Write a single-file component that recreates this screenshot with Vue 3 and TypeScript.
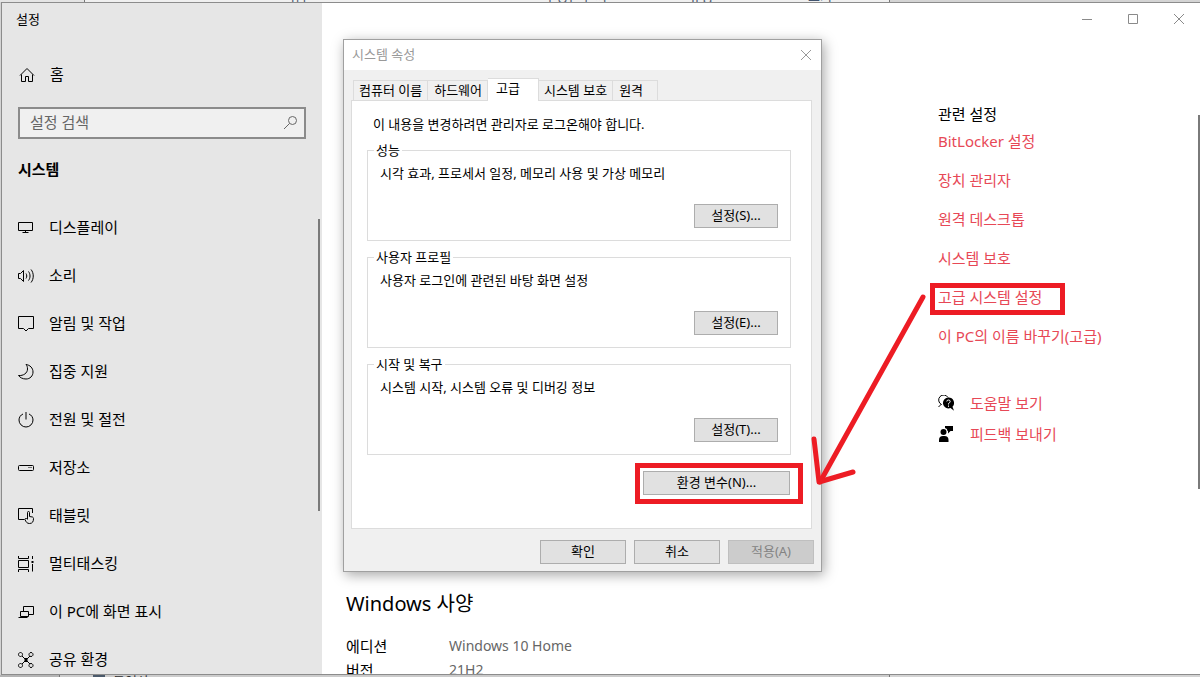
<script setup lang="ts">
import { ref } from 'vue'

interface NavItem {
  label: string
  icon: string
}

const navItems: NavItem[] = [
  { label: '디스플레이', icon: 'display' },
  { label: '소리', icon: 'sound' },
  { label: '알림 및 작업', icon: 'notice' },
  { label: '집중 지원', icon: 'moon' },
  { label: '전원 및 절전', icon: 'power' },
  { label: '저장소', icon: 'storage' },
  { label: '태블릿', icon: 'tablet' },
  { label: '멀티태스킹', icon: 'multitask' },
  { label: '이 PC에 화면 표시', icon: 'project' },
  { label: '공유 환경', icon: 'share' },
]

const iconPaths: Record<string, string> = {
  display: 'M1.5 3.5h14v8h-14zM8.5 11.5v2M5.5 13.5h6',
  sound:
    'M1.5 6.5v5h2l3 3v-11l-3 3zM9 6.5c1 1.5 1 3.500 0 5M11.500 4.500c2 2.500 2 6.500 0 9M14 2.500c3 3.500 3 9.500 0 13',
  notice: 'M1.500 1.500h15v12h-5l-2.500 2.500l-2.500-2.500h-5z',
  moon: 'M9 1.500c4 .5 7 3.500 7 7.500c0 4-3 7-7 7c-3.500 0-6-1.500-7.500-3.500c5 .5 9-2.500 9-6.500c0-2-.5-3.500-1.500-4.500z',
  power: 'M9 1v7.500M6 3c-2.500 1-4 3.500-4 6a7 7 0 0 0 14 0c0-2.500-1.500-5-4-6',
  storage: 'M2.500 6.500h13q1 0 1 1v3q0 1-1 1h-13q-1 0-1-1v-3q0-1 1-1zM11.500 8.500h1M13.500 8.500h1',
  tablet:
    'M7.500 12.500h-6v-11h14v4.500M10.500 12v-6.500q0-1 1-1t1 1v4l3 .5q1 .5 1 1.500c0 3-1 5-4 5c-2.500 0-3.500-1.500-4.500-4q0-1.500 1.500-1l1 1',
  multitask:
    'M1.500 1v2.500h10v-2.500M1.500 5.500h10v7h-10zM1.500 17v-2.500h10v2.500M15.500 1v3M15.500 9v7.500M14.500 6.500h2M14.500 7.500h2',
  project: 'M6.500 8.500v-5h10v8h-5M3.500 8.500h8v5h-8zM1.500 14.500h9',
  share:
    'M5 5l8 8M13 5l-8 8M3.500 1.500a2 2 0 1 0 .01 0M14 1.500a2 2 0 1 0 .01 0M3.500 12.500a2 2 0 1 0 .01 0M14 12.500a2 2 0 1 0 .01 0M8 7.500h2v3h-2z',
}

const relatedLinks: string[] = [
  'BitLocker 설정',
  '장치 관리자',
  '원격 데스크톱',
  '시스템 보호',
  '고급 시스템 설정',
  '이 PC의 이름 바꾸기(고급)',
]

const tabs: string[] = ['컴퓨터 이름', '하드웨어', '고급', '시스템 보호', '원격']
const activeTab = ref('고급')

const groups = [
  { title: '성능', text: '시각 효과, 프로세서 일정, 메모리 사용 및 가상 메모리', button: '설정(S)...' },
  { title: '사용자 프로필', text: '사용자 로그인에 관련된 바탕 화면 설정', button: '설정(E)...' },
  { title: '시작 및 복구', text: '시스템 시작, 시스템 오류 및 디버깅 정보', button: '설정(T)...' },
]

const specs = [
  { name: '에디션', value: 'Windows 10 Home' },
  { name: '버전', value: '21H2' },
]

const query = ref('')
</script>

<template>
  <div class="desktop">
    <div class="explorer" aria-hidden="true">
      <div class="explorer-head">
        <span class="col-name">이름</span>
        <span class="col-date">수정한 날짜</span>
        <span class="col-type">유형</span>
        <span class="col-size">크기</span>
      </div>
      <div class="explorer-foot">
        <span class="thumb"></span>
        <span>동영상</span>
      </div>
    </div>

    <div class="window">
      <aside class="sidebar">
        <div class="app-title">설정</div>
        <a href="#" class="nav-link home">
          <svg class="icon" viewBox="0 0 18 18">
            <path d="M2 9.500l7-7l7 7M3.500 8.500v7h4v-5h3v5h4v-7" />
          </svg>
          <span>홈</span>
        </a>
        <label class="search">
          <input v-model="query" type="text" placeholder="설정 검색" aria-label="설정 검색" />
          <svg class="icon" viewBox="0 0 18 18">
            <circle cx="10.500" cy="6.500" r="4" />
            <path d="M7.500 9.500l-5.500 5.500" />
          </svg>
        </label>
        <h2 class="section">시스템</h2>
        <nav class="nav">
          <a v-for="item in navItems" :key="item.label" href="#" class="nav-link">
            <svg class="icon" viewBox="0 0 18 18"><path :d="iconPaths[item.icon]" /></svg>
            <span>{{ item.label }}</span>
          </a>
          <span class="nav-scroll"></span>
        </nav>
      </aside>

      <main class="main">
        <div class="controls">
          <button type="button" aria-label="최소화">
            <svg viewBox="0 0 12 12"><path d="M1 6.500h10" /></svg>
          </button>
          <button type="button" aria-label="최대화">
            <svg viewBox="0 0 12 12"><path d="M1.500 1.500h9v9h-9z" /></svg>
          </button>
          <button type="button" aria-label="닫기">
            <svg viewBox="0 0 12 12"><path d="M1 1l10 10M11 1l-10 10" /></svg>
          </button>
        </div>

        <div class="content">
          <section class="about">
            <h1>Windows 사양</h1>
            <table>
              <tbody>
                <tr v-for="spec in specs" :key="spec.name">
                  <th scope="row">{{ spec.name }}</th>
                  <td>{{ spec.value }}</td>
                </tr>
              </tbody>
            </table>
          </section>

          <section class="related">
            <h2>관련 설정</h2>
            <ul>
              <li v-for="link in relatedLinks" :key="link" :class="{ marked: link === '고급 시스템 설정' }">
                <a href="#">{{ link }}</a>
              </li>
            </ul>
            <div class="support">
              <a href="#">
                <svg viewBox="0 0 16 16">
                  <path class="line" d="M3.500 9.500a5 5 0 1 1 6.500-7M3.500 9l-3 3" />
                  <path d="M10.500 2.500a5.500 5.500 0 1 0 2 10.600l3.500 2.700l-1.500-4a5.500 5.500 0 0 0-4-9.300z" />
                  <path class="mark" d="M8.800 6.500q0-1.500 1.700-1.500t1.700 1.500q0 1-1.700 2v1M10.500 10.500v1.300" />
                </svg>
                <span>도움말 보기</span>
              </a>
              <a href="#">
                <svg viewBox="0 0 16 16">
                  <circle cx="5.500" cy="6" r="3" />
                  <path d="M1 16v-2q0-4 4-4h1.500q4 0 4 4v2zM7 0h8v5h-2.500l-2.500 2.500v-2.500h-.5q0-2.500-2.500-3z" />
                </svg>
                <span>피드백 보내기</span>
              </a>
            </div>
          </section>
        </div>
        <span class="page-scroll"></span>
      </main>

      <div class="dialog" role="dialog" aria-labelledby="dialog-title">
        <header class="dialog-head">
          <span id="dialog-title">시스템 속성</span>
          <button type="button" aria-label="닫기">
            <svg viewBox="0 0 12 12"><path d="M1 1l10 10M11 1l-10 10" /></svg>
          </button>
        </header>
        <div class="dialog-body">
          <div class="tabs" role="tablist">
            <button
              v-for="tab in tabs"
              :key="tab"
              type="button"
              role="tab"
              class="tab"
              :class="{ active: tab === activeTab }"
              :aria-selected="tab === activeTab"
              @click="activeTab = tab"
            >
              {{ tab }}
            </button>
          </div>
          <div class="panel">
            <p class="notice">이 내용을 변경하려면 관리자로 로그온해야 합니다.</p>
            <fieldset v-for="group in groups" :key="group.title">
              <legend>{{ group.title }}</legend>
              <p>{{ group.text }}</p>
              <button type="button" class="btn small">{{ group.button }}</button>
            </fieldset>
            <div class="env">
              <button type="button" class="btn">환경 변수(N)...</button>
            </div>
          </div>
          <footer class="actions">
            <button type="button" class="btn">확인</button>
            <button type="button" class="btn">취소</button>
            <button type="button" class="btn" disabled>적용(A)</button>
          </footer>
        </div>
      </div>

      <svg class="arrow" viewBox="0 0 120 196" aria-hidden="true">
        <path d="M113 7L10 192" />
        <path d="M4 149L9 192L43 182" />
      </svg>
    </div>
  </div>
</template>

<style>
body {
  margin: 0;
  overflow: hidden;
}
</style>

<style scoped>
*,
*::after {
  box-sizing: border-box;
}

.desktop {
  position: relative;
  display: flex;
  height: 100vh;
  padding: 2px 0 2px 1px;
  overflow: hidden;
  background: #d4d4d4;
  color: #000;
  font-family: 'Noto Sans', 'Noto Sans CJK KR', sans-serif;
  font-size: 15px;
  line-height: 24px;
}

h1,
h2,
p,
ul {
  margin: 0;
  padding: 0;
  font-weight: 400;
}

a {
  color: inherit;
  text-decoration: none;
}

button,
input {
  margin: 0;
  padding: 0;
  border: 0;
  background: none;
  color: inherit;
  font: inherit;
}

svg {
  display: block;
  flex: none;
  fill: none;
  stroke: currentColor;
}

/* Explorer window showing around the edges */
.explorer {
  position: absolute;
  inset: 0;
  display: flex;
  flex-direction: column;
  justify-content: space-between;
  color: #44546e;
  font-size: 13px;
  line-height: 12px;
}

.explorer-head,
.explorer-foot {
  display: flex;
  height: 2px;
  overflow: hidden;
  white-space: nowrap;
}

.explorer-head {
  align-items: flex-end;
  width: 890px;
  padding-left: 283px;
  border-right: 1px solid #777;
  background: linear-gradient(90deg, #e4e4e4 84px, #777 84px, #777 85px, #f0f0f0 85px);
}

.col-name {
  width: 261px;
}

.col-date {
  width: 145px;
}

.col-type {
  width: 119px;
}

.explorer-foot {
  gap: 8px;
  width: 890px;
  padding-left: 93px;
  border-right: 1px solid #777;
  background: linear-gradient(90deg, #b4b4b4 59px, #777 59px, #777 60px, #ccc 60px);
  color: #333;
}

.thumb {
  width: 12px;
  background: #4b5a6b;
}

/* Settings window */
.window {
  position: relative;
  display: flex;
  flex: 1;
  min-width: 0;
  overflow: hidden;
  border: 1px solid #8c8c8c;
  border-right: 0;
  background: #fff;
}

.sidebar {
  display: flex;
  flex: none;
  flex-direction: column;
  width: 320px;
  overflow: hidden;
  background: #e6e6e6;
}

.app-title {
  padding: 4px 14px 0;
  font-size: 13px;
}

.nav-link {
  display: flex;
  flex: none;
  align-items: center;
  gap: 14px;
  height: 48px;
  padding-left: 15px;
}

.nav-link span {
  padding-bottom: 2px;
}

.icon {
  width: 18px;
  height: 18px;
}

.home {
  margin-top: 20px;
  padding-left: 16px;
}

.search {
  display: flex;
  flex: none;
  align-items: center;
  height: 32px;
  margin: 8px 16px 0;
  padding: 0 4px 0 10px;
  border: 2px solid #8b8b8b;
  background: #f0f0f0;
  color: #666;
}

.search input {
  flex: 1;
  min-width: 0;
  padding-bottom: 2px;
  outline: 0;
}

.search input::placeholder {
  color: #666;
  opacity: 1;
}

.section {
  margin: 18px 16px 23px;
  font-size: 15px;
  font-weight: 700;
}

.nav {
  position: relative;
  flex: 1;
  min-height: 0;
  overflow: hidden;
}

.nav-scroll {
  position: absolute;
  top: 15px;
  right: 2px;
  width: 2px;
  height: 292px;
  background: #7a7a7a;
}

.main {
  position: relative;
  flex: 1;
  min-width: 0;
}

.controls {
  display: flex;
  justify-content: flex-end;
  gap: 4px;
  color: #8a8a8a;
}

.controls button {
  display: grid;
  place-items: center;
  width: 42px;
  height: 32px;
}

.controls svg,
.dialog-head svg {
  width: 12px;
  height: 12px;
}

.content {
  display: grid;
  grid-template-columns: 592px 1fr;
}

.about {
  padding: 555px 0 0 24px;
}

h1 {
  font-size: 20px;
  line-height: 28px;
}

table {
  margin-top: 16px;
  border-collapse: collapse;
}

th,
td {
  padding: 0;
  text-align: left;
  font-weight: 400;
}

th {
  width: 103px;
}

td {
  color: #666;
  font-size: 14px;
}

.related {
  padding: 67px 0 0 24px;
  color: #e74856;
  white-space: nowrap;
}

.related h2 {
  color: #000;
  font-size: 15px;
}

.related ul {
  margin-top: -4px;
  list-style: none;
}

.related li {
  position: relative;
  line-height: 39px;
}

.marked::after {
  position: absolute;
  top: 5px;
  left: -8px;
  width: 135px;
  height: 32px;
  border: 5px solid #ed1c24;
  content: '';
  pointer-events: none;
}

.support {
  display: grid;
  gap: 7px;
  margin-top: 35px;
}

.support a {
  display: flex;
  align-items: center;
  gap: 16px;
}

.support svg {
  width: 16px;
  height: 16px;
  fill: #000;
  stroke: none;
}

.support .line {
  fill: none;
  stroke: #000;
}

.support .mark {
  fill: none;
  stroke: #fff;
}

.page-scroll {
  position: absolute;
  top: 112px;
  right: 0;
  width: 2px;
  height: 374px;
  background: #7a7a7a;
}

/* System properties dialog */
.dialog {
  position: absolute;
  top: 36px;
  left: 341px;
  width: 479px;
  border: 1px solid #a0a0a0;
  background: #f0f0f0;
  box-shadow: 2px 3px 12px rgba(0, 0, 0, 0.35);
  font-size: 13px;
  line-height: 16px;
}

.dialog-head {
  display: flex;
  align-items: center;
  justify-content: space-between;
  height: 30px;
  padding: 0 9px 0 8px;
  background: #fff;
  color: #999;
}

.dialog-head span {
  padding-bottom: 2px;
}

.dialog-body {
  padding: 8px 7px 7px;
}

.tabs {
  display: flex;
  align-items: flex-end;
  padding-left: 2px;
}

.tab {
  height: 20px;
  padding: 0 5px 2px;
  border: 1px solid #dcdcdc;
  border-bottom: 0;
}

.tab + .tab {
  padding-left: 6px;
  border-left: 0;
}

.tab + .tab.active {
  position: relative;
  height: 23px;
  margin-bottom: -1px;
  padding: 0 18px 4px 8px;
  background: #fff;
}

.tab.active + .tab {
  padding-left: 5px;
}

.tab:last-child {
  padding-right: 14px;
}

.panel {
  margin-right: 2px;
  padding: 15px 20px 24px 15px;
  border: 1px solid #dcdcdc;
  background: #fff;
}

.notice {
  padding: 0 6px;
}

fieldset {
  display: flex;
  flex-direction: column;
  justify-content: space-between;
  min-width: 0;
  height: 98px;
  margin: 0 0 9px;
  padding: 7px 12px;
  border: 1px solid #dcdcdc;
}

.notice + fieldset {
  margin-top: 11px;
}

legend {
  margin-left: -6px;
  padding: 0 2px;
  line-height: 15px;
}

.btn {
  width: 86px;
  height: 24px;
  padding-bottom: 2px;
  border: 1px solid #adadad;
  background: #e1e1e1;
}

.btn.small {
  align-self: flex-end;
  width: 84px;
  margin-bottom: 5px;
}

.btn:disabled {
  border-color: #bfbfbf;
  background: #ccc;
  color: #838383;
}

.env {
  width: 168px;
  margin: -1px -12px 0 auto;
  padding: 3px 8px 4px 3px;
  border: 5px solid #ed1c24;
}

.env .btn {
  display: block;
  width: 100%;
}

.actions {
  display: flex;
  justify-content: flex-end;
  gap: 8px;
  margin-top: 11px;
}

.arrow {
  position: absolute;
  top: 287px;
  left: 808px;
  width: 120px;
  height: 196px;
  stroke: #ed1c24;
  stroke-width: 5px;
  stroke-linecap: round;
  stroke-linejoin: round;
  pointer-events: none;
}
</style>
